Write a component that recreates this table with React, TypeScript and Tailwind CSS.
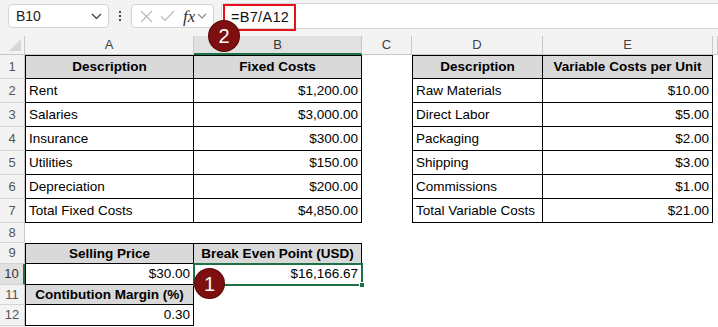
import React from 'react';

const font = { fontFamily: '"Liberation Sans", Arial, sans-serif' };

type C = {
  text?: string;
  bold?: boolean;
  align?: 'left' | 'right' | 'center';
  fill?: boolean;
  t?: boolean;
  l?: boolean;
  r?: boolean;
  b?: boolean;
};

const E: C = {};

// rows 1..12, columns A..E
const rows: C[][] = [
  [
    { text: 'Description', bold: true, align: 'center', fill: true, t: true, l: true, r: true, b: true },
    { text: 'Fixed Costs', bold: true, align: 'center', fill: true, t: true, r: true, b: true },
    E,
    { text: 'Description', bold: true, align: 'center', fill: true, t: true, l: true, r: true, b: true },
    { text: 'Variable Costs per Unit', bold: true, align: 'center', fill: true, t: true, r: true, b: true },
  ],
  [
    { text: 'Rent', l: true, r: true, b: true },
    { text: '$1,200.00', align: 'right', r: true, b: true },
    E,
    { text: 'Raw Materials', l: true, r: true, b: true },
    { text: '$10.00', align: 'right', r: true, b: true },
  ],
  [
    { text: 'Salaries', l: true, r: true, b: true },
    { text: '$3,000.00', align: 'right', r: true, b: true },
    E,
    { text: 'Direct Labor', l: true, r: true, b: true },
    { text: '$5.00', align: 'right', r: true, b: true },
  ],
  [
    { text: 'Insurance', l: true, r: true, b: true },
    { text: '$300.00', align: 'right', r: true, b: true },
    E,
    { text: 'Packaging', l: true, r: true, b: true },
    { text: '$2.00', align: 'right', r: true, b: true },
  ],
  [
    { text: 'Utilities', l: true, r: true, b: true },
    { text: '$150.00', align: 'right', r: true, b: true },
    E,
    { text: 'Shipping', l: true, r: true, b: true },
    { text: '$3.00', align: 'right', r: true, b: true },
  ],
  [
    { text: 'Depreciation', l: true, r: true, b: true },
    { text: '$200.00', align: 'right', r: true, b: true },
    E,
    { text: 'Commissions', l: true, r: true, b: true },
    { text: '$1.00', align: 'right', r: true, b: true },
  ],
  [
    { text: 'Total Fixed Costs', l: true, r: true, b: true },
    { text: '$4,850.00', align: 'right', r: true, b: true },
    E,
    { text: 'Total Variable Costs', l: true, r: true, b: true },
    { text: '$21.00', align: 'right', r: true, b: true },
  ],
  [E, E, E, E, E],
  [
    { text: 'Selling Price', bold: true, align: 'center', fill: true, t: true, l: true, r: true, b: true },
    { text: 'Break Even Point (USD)', bold: true, align: 'center', fill: true, t: true, r: true, b: true },
    E,
    E,
    E,
  ],
  [
    { text: '$30.00', align: 'right', l: true, r: true, b: true },
    { text: '$16,166.67', align: 'right', r: true, b: true },
    E,
    E,
    E,
  ],
  [
    { text: 'Contibution Margin (%)', bold: true, align: 'center', fill: true, l: true, r: true, b: true },
    E,
    E,
    E,
    E,
  ],
  [{ text: '0.30', align: 'right', l: true, r: true, b: true }, E, E, E, E],
];

const Cell = ({ c }: { c: C }) => (
  <div
    className={[
      'flex items-center px-[3px] pt-[1px] whitespace-nowrap text-[13.5px] text-black',
      c.fill ? 'bg-[#d9d9d9]' : 'bg-white',
      c.bold ? 'font-bold' : '',
      c.align === 'right' ? 'justify-end' : c.align === 'center' ? 'justify-center' : 'justify-start',
      c.t ? 'border-t border-t-black' : '',
      c.l ? 'border-l border-l-black' : '',
      c.r ? 'border-r border-r-black' : '',
      c.b ? 'border-b border-b-black' : '',
    ].join(' ')}
  >
    {c.text}
  </div>
);

const Circle = ({ n, className }: { n: string; className: string }) => (
  <div
    className={
      'absolute flex items-center justify-center rounded-full bg-[#7d0f10] text-white text-[20px] shadow-[0_0_0_1px_#5a0707] ' +
      className
    }
  >
    {n}
  </div>
);

export default function App() {
  return (
    <div className="relative w-[718px] h-[327px] overflow-hidden bg-white" style={font}>
      {/* formula toolbar */}
      <div className="flex h-[36px] items-start bg-[#f3f3f3] pl-[8px] pt-[4px]">
        <div className="flex h-[24px] w-[101px] items-center justify-between rounded-[4px] border border-[#d4d4d4] bg-white pl-[7px] pr-[6px] text-[14px] text-[#222]">
          <span>B10</span>
          <svg width="11" height="7" viewBox="0 0 11 7">
            <path d="M1 1l4.5 4.5L10 1" fill="none" stroke="#333" strokeWidth="1.2" />
          </svg>
        </div>
        <div className="flex h-[24px] w-[22px] flex-col items-center justify-center gap-[2px]">
          <span className="h-[2px] w-[2px] bg-[#444]" />
          <span className="h-[2px] w-[2px] bg-[#444]" />
          <span className="h-[2px] w-[2px] bg-[#444]" />
        </div>
        <div className="flex h-[24px] w-[83px] items-center rounded-[4px] border border-[#d4d4d4] bg-white pl-[8px] pr-[3px]">
          <svg width="13" height="13" viewBox="0 0 13 13">
            <path d="M1 1l11 11M12 1L1 12" fill="none" stroke="#b8b8b8" strokeWidth="1.1" />
          </svg>
          <svg width="15" height="12" viewBox="0 0 15 12" className="ml-[7px]">
            <path d="M1 6.5l4 4L14 1" fill="none" stroke="#b8b8b8" strokeWidth="1.1" />
          </svg>
          <span
            className="ml-[8px] text-[17px] leading-none italic text-[#333]"
            style={{ fontFamily: '"Liberation Serif", "Times New Roman", serif' }}
          >
            fx
          </span>
          <svg width="10" height="6" viewBox="0 0 10 6" className="ml-[2px]">
            <path d="M1 1l4 4 4-4" fill="none" stroke="#888" strokeWidth="1.1" />
          </svg>
        </div>
        <div className="ml-[7px] -mt-[1px] flex h-[26px] flex-1 items-start rounded-l-[4px] border-y border-l border-[#d6d6d6] bg-white pl-[1px]">
          <div className="flex h-[27px] w-[73px] items-center border-2 border-[#e8101a] pl-[6px] text-[14.5px] tracking-[0.3px] text-[#111]">
            =B7/A12
          </div>
        </div>
      </div>

      {/* sheet grid */}
      <div className="grid grid-cols-[25px_169px_168px_50px_131px_170px_1fr] grid-rows-[19px_24px_24px_24px_24px_24px_24px_24px_20px_21px_21px_20px_21px_20px]">
        {/* column headers */}
        <div className="relative border-r border-b border-[#c8c8c8] bg-[#f3f3f3]">
          <div className="absolute bottom-[3px] right-[3px] h-0 w-0 border-b-[12px] border-l-[12px] border-b-[#d6d6d6] border-l-transparent" />
        </div>
        {['A', 'B', 'C', 'D', 'E', ''].map((l) => (
          <div
            key={l || 'x'}
            className={
              l === 'B'
                ? 'flex items-center justify-center border-r border-r-[#c8c8c8] border-b-2 border-b-[#1e7145] bg-[#e1e1e1] text-[13px] text-[#333] pt-[1px]'
                : 'flex items-center justify-center border-r border-b border-[#c8c8c8] bg-[#f3f3f3] text-[13px] text-[#444]'
            }
          >
            {l}
          </div>
        ))}

        {rows.map((r, i) => (
          <React.Fragment key={i}>
            <div
              className={
                i === 9
                  ? 'flex items-center justify-center border-b border-b-[#d4d4d4] border-r-2 border-r-[#1e7145] bg-[#e1e1e1] text-[13px] text-[#333]'
                  : 'flex items-center justify-center border-r border-b border-r-[#c8c8c8] border-b-[#d4d4d4] bg-[#f3f3f3] text-[13px] text-[#555]'
              }
            >
              {i + 1}
            </div>
            {r.map((c, j) => (
              <Cell key={j} c={c} />
            ))}
            <div className="bg-white" />
          </React.Fragment>
        ))}
        <div className="border-r border-r-[#c8c8c8] bg-[#f3f3f3]" />
      </div>

      {/* active cell B10 */}
      <div className="pointer-events-none absolute left-[193px] top-[263px] h-[23px] w-[170px] border-2 border-[#1e7145]" />
      <div className="absolute left-[359px] top-[282px] h-[6px] w-[6px] border border-white bg-[#1e7145]" />

      <Circle n="2" className="left-[209px] top-[21px] h-[30px] w-[30px]" />
      <Circle n="1" className="left-[195px] top-[269px] h-[29px] w-[29px]" />
    </div>
  );
}
